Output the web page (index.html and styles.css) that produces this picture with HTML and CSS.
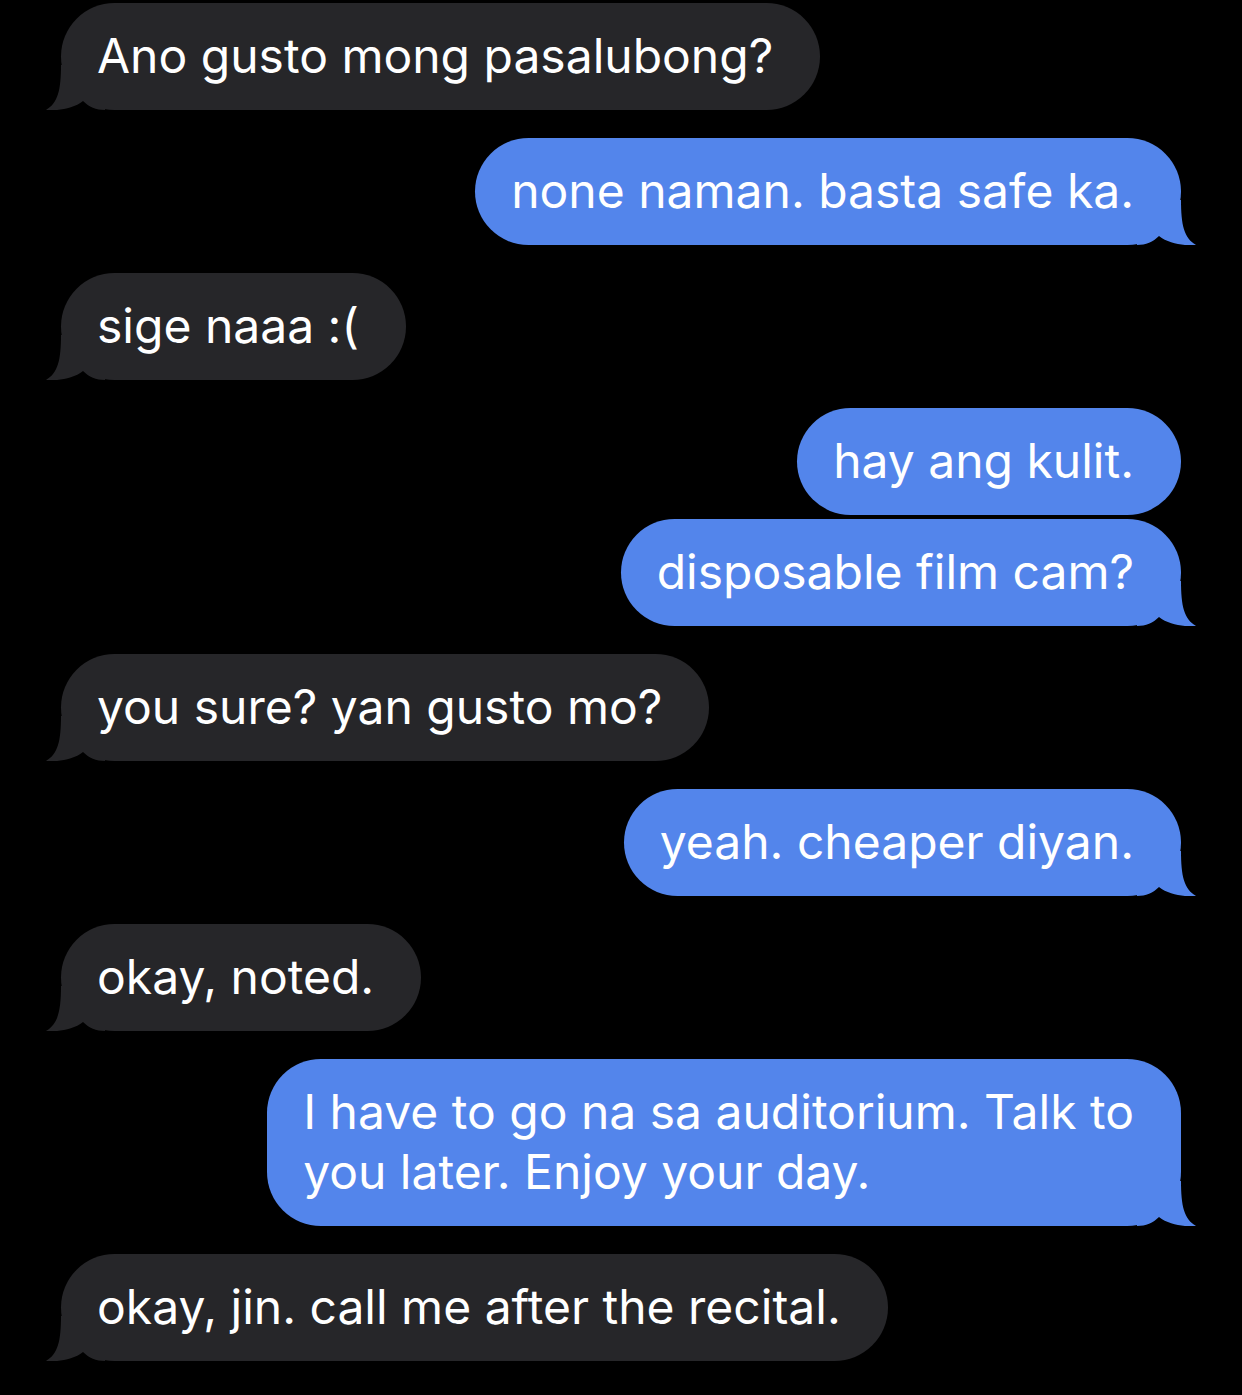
FILE: index.html
```html
<!DOCTYPE html>
<html>
<head>
<meta charset="utf-8">
<link rel="stylesheet" href="styles.css">
</head>
<body>
<div class="thread">
  <div class="row them">
    <div class="bubble">Ano gusto mong pasalubong?<svg class="tail" viewBox="0 0 60 45"><path d="M60 0H16C16 25 13 38 1 45C12 46 28 44 38 36C44 42 51 45 60 45Z"/></svg></div>
  </div>
  <div class="row me">
    <div class="bubble">none naman. basta safe ka.<svg class="tail" viewBox="0 0 60 45"><path d="M0 0H44C44 25 47 38 59 45C48 46 32 44 22 36C16 42 9 45 0 45Z"/></svg></div>
  </div>
  <div class="row them">
    <div class="bubble">sige naaa :(<svg class="tail" viewBox="0 0 60 45"><path d="M60 0H16C16 25 13 38 1 45C12 46 28 44 38 36C44 42 51 45 60 45Z"/></svg></div>
  </div>
  <div class="row me">
    <div class="bubble">hay ang kulit.</div>
  </div>
  <div class="row me cont">
    <div class="bubble">disposable film cam?<svg class="tail" viewBox="0 0 60 45"><path d="M0 0H44C44 25 47 38 59 45C48 46 32 44 22 36C16 42 9 45 0 45Z"/></svg></div>
  </div>
  <div class="row them">
    <div class="bubble">you sure? yan gusto mo?<svg class="tail" viewBox="0 0 60 45"><path d="M60 0H16C16 25 13 38 1 45C12 46 28 44 38 36C44 42 51 45 60 45Z"/></svg></div>
  </div>
  <div class="row me">
    <div class="bubble">yeah. cheaper diyan.<svg class="tail" viewBox="0 0 60 45"><path d="M0 0H44C44 25 47 38 59 45C48 46 32 44 22 36C16 42 9 45 0 45Z"/></svg></div>
  </div>
  <div class="row them">
    <div class="bubble">okay, noted.<svg class="tail" viewBox="0 0 60 45"><path d="M60 0H16C16 25 13 38 1 45C12 46 28 44 38 36C44 42 51 45 60 45Z"/></svg></div>
  </div>
  <div class="row me">
    <div class="bubble">I have to go na sa auditorium. Talk to<br>you later. Enjoy your day.<svg class="tail" viewBox="0 0 60 45"><path d="M0 0H44C44 25 47 38 59 45C48 46 32 44 22 36C16 42 9 45 0 45Z"/></svg></div>
  </div>
  <div class="row them">
    <div class="bubble">okay, jin. call me after the recital.<svg class="tail" viewBox="0 0 60 45"><path d="M60 0H16C16 25 13 38 1 45C12 46 28 44 38 36C44 42 51 45 60 45Z"/></svg></div>
  </div>
</div>
</body>
</html>
```
FILE: styles.css
```css
html, body {
  margin: 0;
  padding: 0;
  background: #000;
}
body {
  width: 1242px;
  height: 1395px;
  overflow: hidden;
  font-family: "Inter", "Roboto", sans-serif;
}
.thread {
  display: flex;
  flex-direction: column;
  padding: 3px 61px 0 61px;
}
.row {
  display: flex;
  margin-top: 28px;
}
.row:first-child {
  margin-top: 0;
}
.row.cont {
  margin-top: 4px;
}
.row.me {
  justify-content: flex-end;
}
.bubble {
  position: relative;
  isolation: isolate;
  border-radius: 54px;
  padding: 23px 47px 24px 36px;
  font-size: 48px;
  line-height: 60px;
  color: #fff;
  white-space: nowrap;
}
.them .bubble {
  background: #262629;
}
.me .bubble {
  background: #5385eb;
}
.tail {
  position: absolute;
  z-index: -1;
  bottom: 0;
  width: 60px;
  height: 45px;
  display: block;
}
.them .tail {
  left: -16px;
  fill: #262629;
}
.me .tail {
  right: -16px;
  fill: #5385eb;
}
```
